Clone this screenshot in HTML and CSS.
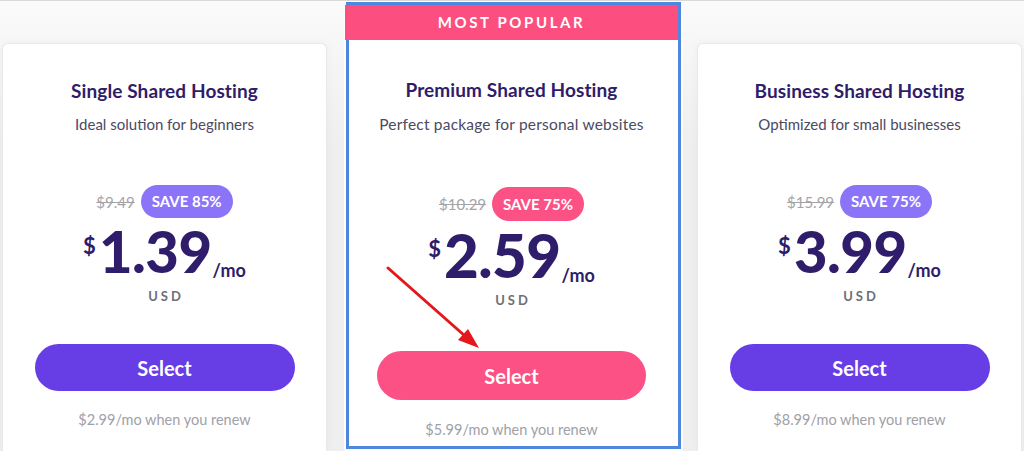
FILE: index.html
```html
<!DOCTYPE html>
<html lang="en">
<head>
<meta charset="utf-8">
<title>Hosting plans</title>
<link rel="stylesheet" href="styles.css">
</head>
<body>
<main class="plans">
  <section class="card">
    <h2 class="title">Single Shared Hosting</h2>
    <p class="subtitle">Ideal solution for beginners</p>
    <div class="deal"><s class="old">$9.49</s><span class="badge">SAVE 85%</span></div>
    <div class="price"><span class="cur">$</span><span class="amt">1.39</span><span class="per">/mo</span></div>
    <div class="usd">USD</div>
    <button class="select">Select</button>
    <p class="renew">$2.99/mo when you renew</p>
  </section>

  <section class="card featured">
    <header class="ribbon">MOST POPULAR</header>
    <div class="body">
      <h2 class="title">Premium Shared Hosting</h2>
      <p class="subtitle">Perfect package for personal websites</p>
      <div class="deal"><s class="old">$10.29</s><span class="badge">SAVE 75%</span></div>
      <div class="price"><span class="cur">$</span><span class="amt">2.59</span><span class="per">/mo</span></div>
      <div class="usd">USD</div>
      <button class="select">Select</button>
      <p class="renew">$5.99/mo when you renew</p>
    </div>
  </section>

  <section class="card">
    <h2 class="title">Business Shared Hosting</h2>
    <p class="subtitle">Optimized for small businesses</p>
    <div class="deal"><s class="old">$15.99</s><span class="badge">SAVE 75%</span></div>
    <div class="price"><span class="cur">$</span><span class="amt">3.99</span><span class="per">/mo</span></div>
    <div class="usd">USD</div>
    <button class="select">Select</button>
    <p class="renew">$8.99/mo when you renew</p>
  </section>
</main>

<svg class="arrow" width="1024" height="451" viewBox="0 0 1024 451" aria-hidden="true">
  <line x1="388" y1="268" x2="465" y2="336" stroke="#e3171c" stroke-width="3" stroke-linecap="round"/>
  <polygon points="479,348 458,340 468,329" fill="#e3171c"/>
</svg>
</body>
</html>
```
FILE: styles.css
```css
* { box-sizing: border-box; }

html, body {
  margin: 0;
  padding: 0;
}

body {
  width: 1024px;
  height: 451px;
  overflow: hidden;
  position: relative;
  font-family: Lato, "Open Sans", Arial, sans-serif;
  background: linear-gradient(#fbfbfb 0, #f7f7f7 40px, #efeff0 140px);
  border-top: 1px solid #d9d9d9;
}

.plans {
  display: flex;
  align-items: flex-start;
  padding-left: 2px;
}

.card {
  width: 325px;
  height: 408px;
  margin-top: 42px;
  background: #fff;
  border: 1px solid #e9e9ec;
  border-bottom: 0;
  border-radius: 6px 6px 0 0;
  box-shadow: 0 0 10px rgba(0, 0, 0, 0.04);
  display: flex;
  flex-direction: column;
  align-items: center;
  padding-top: 35px;
  text-align: center;
}

.card + .card { margin-left: 19px; }
.card.featured + .card { margin-left: 16px; }

.featured {
  width: 335px;
  height: 447px;
  margin-top: 1px;
  border: 3px solid #4f87e0;
  border-radius: 0;
  padding-top: 0;
  align-items: stretch;
  box-shadow: 0 0 0 2px #fdfdfd;
}

.ribbon {
  height: 35px;
  margin: 0 0 0 -4px;
  background: #fc4f7f;
  color: #fff;
  font-weight: 700;
  font-size: 15px;
  letter-spacing: 2.6px;
  line-height: 34px;
  text-align: center;
}

.featured .body {
  display: flex;
  flex-direction: column;
  align-items: center;
  padding-top: 38px;
  padding-right: 4px;
}

.title {
  margin: 0;
  font-size: 19px;
  line-height: 24px;
  font-weight: 700;
  color: #2f1c6a;
  letter-spacing: 0.1px;
}

.subtitle {
  margin: 10px 0 0;
  font-size: 15px;
  line-height: 22px;
  color: #4b4963;
}

.featured .subtitle { margin-top: 11px; font-size: 15.5px; letter-spacing: 0.2px; }

.deal {
  margin-top: 50px;
  display: flex;
  align-items: center;
  gap: 6px;
}

.featured .deal { margin-top: 52px; }

.old {
  font-size: 15px;
  color: #a4a4a8;
  text-decoration: line-through;
}

.badge {
  height: 33px;
  line-height: 33px;
  padding: 0 11px;
  border-radius: 17px;
  background: #8b74f7;
  color: #fff;
  font-weight: 700;
  font-size: 15px;
}

.featured .badge {
  height: 34px;
  line-height: 34px;
  background: #fc5185;
}

.price {
  margin-top: 4px;
  display: flex;
  align-items: flex-start;
  color: #2f1c6a;
  font-weight: 900;
}

.cur {
  font-size: 22px;
  line-height: 22px;
  margin-top: 13px;
  margin-right: 3px;
  font-weight: 700;
}

.amt {
  font-size: 58px;
  line-height: 58px;
  letter-spacing: -0.5px;
}

.per {
  font-size: 18px;
  line-height: 18px;
  margin-top: 39px;
  margin-left: 1px;
  font-weight: 700;
}

.featured .price { margin-top: 4px; }
.featured .amt { font-size: 60px; line-height: 60px; }
.featured .per { margin-top: 41px; }

.usd {
  margin-top: 8px;
  font-size: 13px;
  line-height: 16px;
  font-weight: 700;
  letter-spacing: 3px;
  color: #6e6e76;
  padding-left: 3px;
}

.featured .usd { margin-top: 7px; }

.select {
  margin-top: 40px;
  width: 260px;
  height: 47px;
  border: 0;
  border-radius: 24px;
  background: #673de6;
  color: #fff;
  font-family: inherit;
  font-size: 20px;
  font-weight: 700;
  cursor: pointer;
}

.featured .select {
  margin-top: 43px;
  width: 269px;
  height: 49px;
  border-radius: 25px;
  background: #fc5185;
}

.renew {
  margin: 19px 0 0;
  font-size: 14.5px;
  line-height: 20px;
  color: #a0a0a8;
}

.featured .renew { margin-top: 20px; }

.arrow {
  position: absolute;
  left: 0;
  top: -1px;
  pointer-events: none;
}
```
